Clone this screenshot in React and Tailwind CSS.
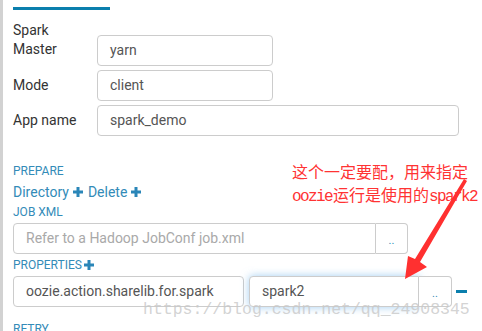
import React from 'react';

function Plus() {
  return (
    <svg width="10" height="10" viewBox="0 0 10 10" className="inline-block">
      <rect x="0" y="3.5" width="10" height="3" fill="#2a86b8" />
      <rect x="3.5" y="0" width="3" height="10" fill="#2a86b8" />
    </svg>
  );
}

function Field({ value, className = '', placeholder = false }) {
  return (
    <div
      className={`h-[31px] border border-[#ccc] rounded-[4px] px-[12px] flex items-center text-[14px] bg-white ${placeholder ? 'text-[#a9a9a9]' : 'text-[#555]'} ${className}`}
    >
      {value}
    </div>
  );
}

function DotsButton({ className = '' }) {
  return (
    <div className={`h-[31px] border border-[#ccc] rounded-r-[4px] flex items-end justify-center pb-[7px] text-[11px] leading-none text-[#338bb8] bg-white ${className}`}>
      ..
    </div>
  );
}

export default function App() {
  return (
    <div className="relative w-[482px] h-[331px] overflow-hidden bg-white border-l-[3px] border-[#d2d2d2] font-['Roboto',sans-serif]">
      <div className="pl-[10px] pt-[7px]">
        <div className="w-[97px] h-[3px] bg-[#0b7fad]" />

        <div className="mt-[11px] flex flex-col gap-[4px] text-[14px] text-[#333]">
          <div className="flex items-start">
            <div className="w-[84px] leading-[19px]">Spark<br />Master</div>
            <Field value="yarn" className="mt-[14px] w-[176px]" />
          </div>
          <div className="flex items-center">
            <div className="w-[84px]">Mode</div>
            <Field value="client" className="w-[176px]" />
          </div>
          <div className="flex items-center">
            <div className="w-[84px]">App name</div>
            <Field value="spark_demo" className="w-[362px]" />
          </div>
        </div>

        <div className="mt-[27px] text-[12px] leading-[16px] text-[#338bb8]">PREPARE</div>
        <div className="mt-[3px] flex items-center text-[14px] leading-[20px] text-[#338bb8]">
          <span>Directory</span>
          <span className="ml-[4px] mr-[5px] flex"><Plus /></span>
          <span>Delete</span>
          <span className="ml-[4px] flex"><Plus /></span>
        </div>
        <div className="mt-[2px] text-[12px] leading-[16px] text-[#338bb8]">JOB XML</div>
        <div className="mt-[3px] flex">
          <Field value="Refer to a Hadoop JobConf job.xml" placeholder className="w-[363px] rounded-r-none" />
          <DotsButton className="w-[32px] border-l-0" />
        </div>
        <div className="mt-[3px] flex items-center text-[12px] leading-[16px] text-[#338bb8]">
          <span>PROPERTIES</span>
          <span className="ml-[2px] flex"><Plus /></span>
        </div>
        <div className="mt-[3px] flex items-center">
          <Field value="oozie.action.sharelib.for.spark" className="w-[231px]" />
          <Field
            value="spark2"
            className="ml-[5px] w-[170px] rounded-r-none border-[#66afe9] shadow-[0_0_8px_rgba(102,175,233,0.6)]"
          />
          <DotsButton className="w-[33px] border-l-0" />
          <div className="ml-[4px] w-[11px] h-[3px] bg-[#0b7fad]" />
        </div>
        <div className="mt-[14px] text-[12px] leading-[16px] text-[#338bb8]">RETRY</div>
      </div>

      <div className="absolute left-[289px] top-[160px] text-[16px] leading-[23px] text-[#ff3333] font-['Noto_Sans_CJK_SC',sans-serif] whitespace-nowrap">
        <div>这个一定要配，用来指定</div>
        <div>
          <span className="font-['Liberation_Mono',monospace] tracking-[-1.6px]">oozie</span>
          <span className="ml-[1px]">运行是使用的</span>
          <span className="font-['Liberation_Mono',monospace] tracking-[-1.6px]">spark2</span>
        </div>
      </div>

      <svg className="absolute left-0 top-0" width="482" height="331" viewBox="0 0 482 331">
        <polygon
          points="402,279 405,256 412,259 461,179 464,181 417,262 424,267"
          fill="#ff3030"
        />
      </svg>

      <div className="absolute left-[140px] top-[299px] text-[16.5px] leading-[22px] text-[#c8c8c8]/80 font-['Liberation_Mono',monospace] whitespace-nowrap">
        https://blog.csdn.net/qq_24908345
      </div>
    </div>
  );
}
